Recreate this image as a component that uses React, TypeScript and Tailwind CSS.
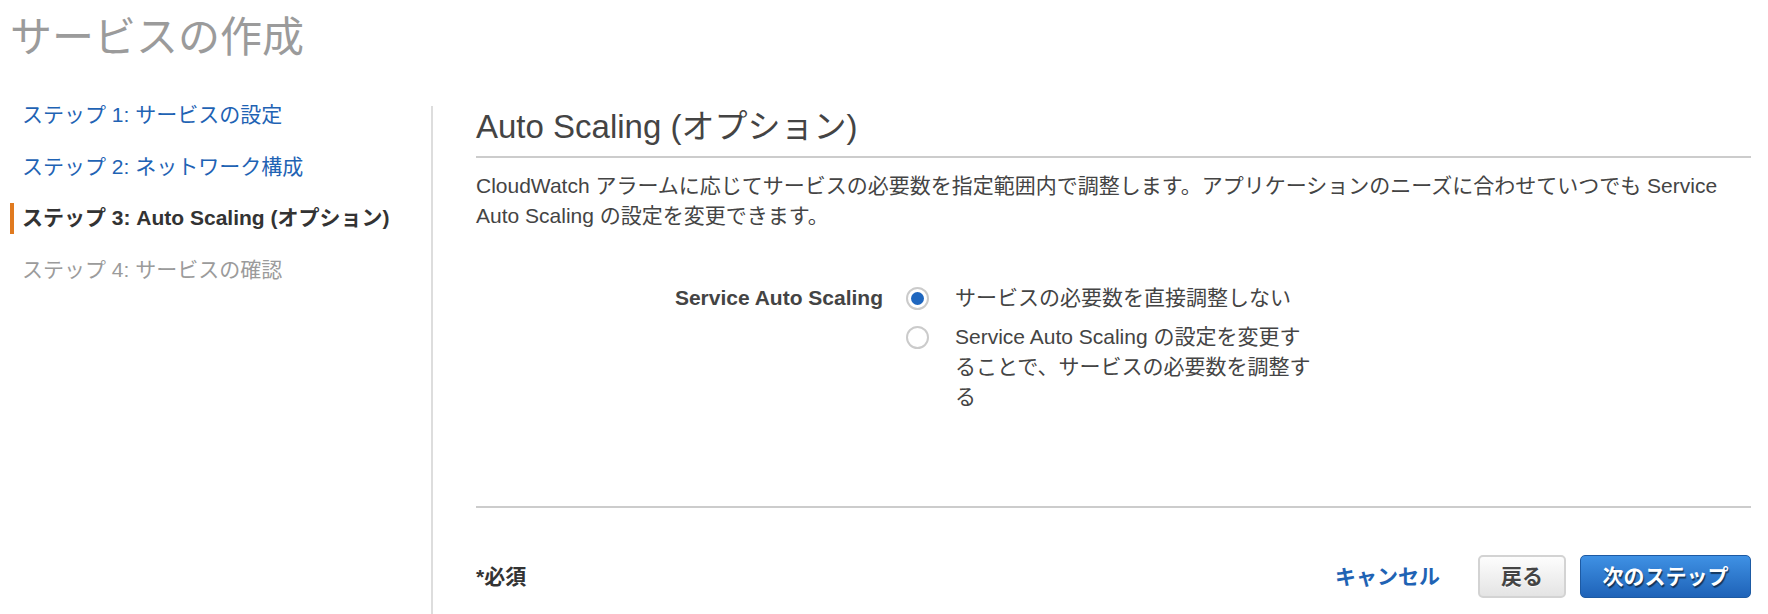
import React from "react";

const font = "font-['Liberation_Sans','Noto_Sans_CJK_JP',sans-serif]";

function Step({
  label,
  state,
}: {
  label: string;
  state: "link" | "active" | "disabled";
}) {
  const color =
    state === "link"
      ? "text-[#1f63b4]"
      : state === "active"
      ? "text-[#333333] font-bold"
      : "text-[#9b9b9b]";
  return (
    <div className="flex items-center h-[30px]">
      <span
        className={
          "ml-[10px] w-[4px] h-[31px] " +
          (state === "active" ? "bg-[#e07a1f]" : "bg-transparent")
        }
      />
      <span className={"ml-[8px] text-[21px] leading-[30px] whitespace-nowrap " + color}>
        {label}
      </span>
    </div>
  );
}

function Radio({ checked }: { checked: boolean }) {
  return (
    <span className="flex items-center justify-center w-[23px] h-[23px] rounded-full border-2 border-[#cbcbcb] bg-white shrink-0">
      {checked && <span className="w-[13px] h-[13px] rounded-full bg-[#1e66bf]" />}
    </span>
  );
}

export default function App() {
  return (
    <div className={"w-full h-[614px] bg-white flex flex-col overflow-hidden " + font}>
      <div className="h-[90px] pt-[17px] pl-[10px]">
        <h1 className="text-[42px] leading-[42px] text-[#9b9b9b] font-normal">
          サービスの作成
        </h1>
      </div>
      <div className="flex flex-1">
        <nav className="w-[431px] shrink-0 flex flex-col gap-[21.5px] pt-[10px]">
          <Step label="ステップ 1: サービスの設定" state="link" />
          <Step label="ステップ 2: ネットワーク構成" state="link" />
          <Step label="ステップ 3: Auto Scaling (オプション)" state="active" />
          <Step label="ステップ 4: サービスの確認" state="disabled" />
        </nav>
        <div className="w-[2px] mt-[16px] bg-[#dddddd] shrink-0" />
        <main className="flex-1 pl-[43px] pr-[17px] pt-[17px] text-[#444444]">
          <h2 className="text-[33px] leading-[40px] font-normal pb-[9px] border-b-2 border-[#cccccc]">
            Auto Scaling (オプション)
          </h2>
          <p className="mt-[13px] text-[21px] leading-[30px]">
            CloudWatch アラームに応じてサービスの必要数を指定範囲内で調整します。アプリケーションのニーズに合わせていつでも Service
            <br />
            Auto Scaling の設定を変更できます。
          </p>
          <div className="mt-[52px] flex">
            <div className="w-[407px] text-right text-[21px] leading-[30px] font-bold">
              Service Auto Scaling
            </div>
            <div className="ml-[23px] flex flex-col gap-[9px]">
              <label className="flex items-start">
                <span className="h-[30px] flex items-center">
                  <Radio checked />
                </span>
                <span className="ml-[26px] text-[21px] leading-[30px] whitespace-nowrap">
                  サービスの必要数を直接調整しない
                </span>
              </label>
              <label className="flex items-start">
                <span className="h-[30px] flex items-center">
                  <Radio checked={false} />
                </span>
                <span className="ml-[26px] text-[21px] leading-[30px] whitespace-nowrap">
                  Service Auto Scaling の設定を変更す
                  <br />
                  ることで、サービスの必要数を調整す
                  <br />る
                </span>
              </label>
            </div>
          </div>
          <div className="mt-[94px] border-t-2 border-[#cccccc]" />
          <div className="mt-[47px] h-[43px] flex items-center">
            <span className="text-[21px] font-bold text-[#333333]">*必須</span>
            <div className="ml-auto flex items-center">
              <span className="text-[21px] font-bold text-[#1f63b4]">キャンセル</span>
              <button className="ml-[38px] h-[43px] w-[88px] rounded-[5px] border-2 border-[#d3d3d3] bg-gradient-to-b from-[#fdfdfd] to-[#e4e4e4] text-[21px] font-bold text-[#444444] [text-shadow:0_1px_0_rgba(255,255,255,0.9)]">
                戻る
              </button>
              <button className="ml-[14px] h-[43px] w-[171px] rounded-[5px] border border-[#1d5aa3] bg-gradient-to-b from-[#3f91e4] to-[#1f63b8] text-[21px] font-bold text-white [text-shadow:1px_2px_1px_rgba(0,0,0,0.55)]">
                次のステップ
              </button>
            </div>
          </div>
        </main>
      </div>
    </div>
  );
}
